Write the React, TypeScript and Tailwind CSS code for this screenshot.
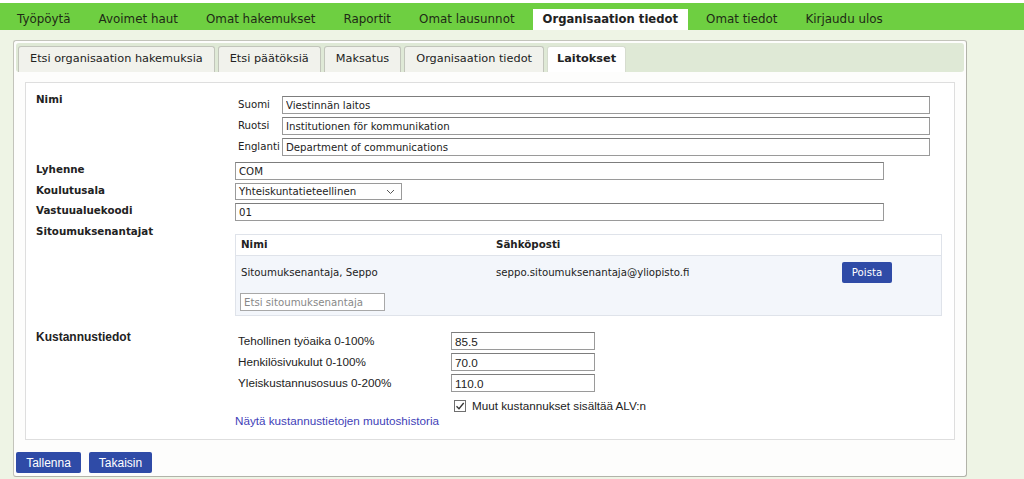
import React from "react";

const navItems = [
  "Työpöytä",
  "Avoimet haut",
  "Omat hakemukset",
  "Raportit",
  "Omat lausunnot",
  "Organisaation tiedot",
  "Omat tiedot",
  "Kirjaudu ulos",
];

const subTabs = [
  "Etsi organisaation hakemuksia",
  "Etsi päätöksiä",
  "Maksatus",
  "Organisaation tiedot",
  "Laitokset",
];

const inputCls =
  "h-[18px] border border-[#9a9a9a] border-t-[#7d7d7d] bg-white px-[3px] text-[10.2px] leading-[16px] text-[#222] outline-none";

const tahoma = { fontFamily: '"Liberation Sans", Tahoma, sans-serif' };

const App = () => {
  return (
    <div
      className="h-[479px] w-[1024px] overflow-hidden bg-[#eef4e5] text-[#222]"
      style={{ fontFamily: '"DejaVu Sans", Verdana, sans-serif' }}
    >
      {/* Päänavigaatio */}
      <div className="bg-white pt-[3px]">
        <div className="flex h-[27px] items-end gap-2 bg-[#6ecf41] pl-[7px]">
          {navItems.map((item) => {
            const active = item === "Organisaation tiedot";
            return (
              <div
                key={item}
                className={
                  active
                    ? "flex h-[21px] items-center bg-white px-[10px] text-[11.6px] font-bold text-[#222]"
                    : "flex h-[21px] items-center px-[10px] text-[11.9px] text-[#1f2a16]"
                }
              >
                {item}
              </div>
            );
          })}
        </div>
      </div>

      {/* Paneeli */}
      <div className="flex pt-[10px]">
        <div className="ml-[13px] w-[954px] rounded-[3px] border border-[#c3c4bb] border-r-[#b2b3a9] border-b-[#b2b3a9] bg-[#fdfdfc] p-[2px] pb-[3px]">
          {/* Välilehdet */}
          <div className="flex h-[29px] items-end gap-[3px] rounded-[3px] bg-[#dfe9d6] pl-[2px]">
            {subTabs.map((tab) => {
              const active = tab === "Laitokset";
              return (
                <div
                  key={tab}
                  className={
                    active
                      ? "flex h-[26px] items-center rounded-t-[3px] border border-b-0 border-[#d6dccf] bg-white px-[9px] text-[11.3px] font-bold"
                      : "flex h-[26px] items-center rounded-t-[3px] border border-b-0 border-[#c2c5bb] bg-[#f1f2ec] px-[11px] text-[11.3px]"
                  }
                >
                  {tab}
                </div>
              );
            })}
          </div>

          {/* Sisältö */}
          <div className="ml-[9px] mr-[9px] mt-[10px] h-[358px] border border-[#dedede] bg-white pl-[10px] pt-[9px]">
            {/* Nimi */}
            <div className="flex">
              <div className="w-[199px] text-[10.3px] font-bold">Nimi</div>
              <div className="flex flex-col gap-[3px] pt-[4px]">
                {[
                  ["Suomi", "Viestinnän laitos"],
                  ["Ruotsi", "Institutionen för kommunikation"],
                  ["Englanti", "Department of communications"],
                ].map(([lang, val]) => (
                  <div key={lang} className="flex items-center">
                    <span className="w-[47px] pl-[3px] text-[10.2px]">{lang}</span>
                    <input className={`${inputCls} w-[648px]`} defaultValue={val} />
                  </div>
                ))}
              </div>
            </div>

            {/* Lyhenne */}
            <div className="mt-[6px] flex">
              <div className="w-[199px] text-[10.3px] font-bold">Lyhenne</div>
              <input className={`${inputCls} w-[649px]`} defaultValue="COM" />
            </div>

            {/* Koulutusala */}
            <div className="mt-[3px] flex">
              <div className="w-[199px] text-[10.3px] font-bold">Koulutusala</div>
              <div className="flex h-[17px] w-[167px] items-center justify-between border border-[#9a9a9a] bg-white pl-[3px] pr-[6px] text-[10.2px]">
                <span>Yhteiskuntatieteellinen</span>
                <svg width="9" height="6" viewBox="0 0 9 6">
                  <path d="M1 1 L4.5 4.5 L8 1" fill="none" stroke="#555" strokeWidth="1" />
                </svg>
              </div>
            </div>

            {/* Vastuualuekoodi */}
            <div className="mt-[3px] flex">
              <div className="w-[199px] text-[10.3px] font-bold">Vastuualuekoodi</div>
              <input className={`${inputCls} w-[649px]`} defaultValue="01" />
            </div>

            {/* Sitoumuksenantajat */}
            <div className="mt-[3px] flex">
              <div className="w-[199px] text-[10.3px] font-bold">Sitoumuksenantajat</div>
              <div className="mt-[10px] w-[707px] border border-[#dfe3ea]">
                <div className="flex h-[21px] items-center border-b border-[#dfe3ea] bg-white text-[10.3px] font-bold">
                  <span className="w-[260px] pl-[5px]">Nimi</span>
                  <span>Sähköposti</span>
                </div>
                <div className="bg-[#f3f6fb] pb-[4px]">
                  <div className="flex h-[33px] items-center text-[10.2px]">
                    <span className="w-[260px] pl-[5px]">Sitoumuksenantaja, Seppo</span>
                    <span className="w-[346px]">seppo.sitoumuksenantaja@yliopisto.fi</span>
                    <button className="h-[21px] w-[50px] rounded-[2px] bg-[#2f4ba7] text-[10.2px] text-white">
                      Poista
                    </button>
                  </div>
                  <div className="mt-[4px] flex pl-[4px]">
                    <input
                      className="h-[18px] w-[145px] border border-[#a8a8a8] bg-white px-[3px] text-[10.2px] text-[#222] outline-none placeholder:text-[#888]"
                      placeholder="Etsi sitoumuksenantaja"
                    />
                  </div>
                </div>
              </div>
            </div>

            {/* Kustannustiedot */}
            <div className="mt-[16px] flex" style={tahoma}>
              <div className="-mt-[4px] w-[199px] text-[12px] font-bold">Kustannustiedot</div>
              <div className="flex flex-col">
                <div className="flex flex-col gap-[3px]">
                  {[
                    ["Tehollinen työaika 0-100%", "85.5"],
                    ["Henkilösivukulut 0-100%", "70.0"],
                    ["Yleiskustannusosuus 0-200%", "110.0"],
                  ].map(([label, val]) => (
                    <div key={label} className="flex h-[18px] items-center">
                      <span className="w-[216px] pl-[3px] text-[11.7px] leading-[14px]">
                        {label}
                      </span>
                      <input
                        className="h-[18px] w-[144px] border border-[#9a9a9a] border-t-[#7d7d7d] bg-white px-[3px] text-[11.7px] text-[#222] outline-none"
                        defaultValue={val}
                      />
                    </div>
                  ))}
                </div>
                <label className="ml-[219px] mt-[7px] flex h-[13px] items-center gap-[6px] text-[11.7px]">
                  <span className="flex h-[12px] w-[12px] items-center justify-center border border-[#6f6f6f] bg-white">
                    <svg width="10" height="10" viewBox="0 0 10 10">
                      <path d="M1.5 5.2 L4 7.7 L8.7 2" fill="none" stroke="#333" strokeWidth="1.3" />
                    </svg>
                  </span>
                  <span>Muut kustannukset sisältää ALV:n</span>
                </label>
                <a href="#" className="mt-[2px] text-[11.7px] leading-[14px] text-[#3f3fb8]">
                  Näytä kustannustietojen muutoshistoria
                </a>
              </div>
            </div>
          </div>

          {/* Painikkeet */}
          <div className="mt-[12px] flex gap-2" style={tahoma}>
            <button className="h-[21px] w-[65px] rounded-[2px] bg-[#2f4ba7] text-[12px] text-white">
              Tallenna
            </button>
            <button className="h-[21px] w-[63px] rounded-[2px] bg-[#2f4ba7] text-[12px] text-white">
              Takaisin
            </button>
          </div>
        </div>
      </div>
    </div>
  );
};

export default App;
